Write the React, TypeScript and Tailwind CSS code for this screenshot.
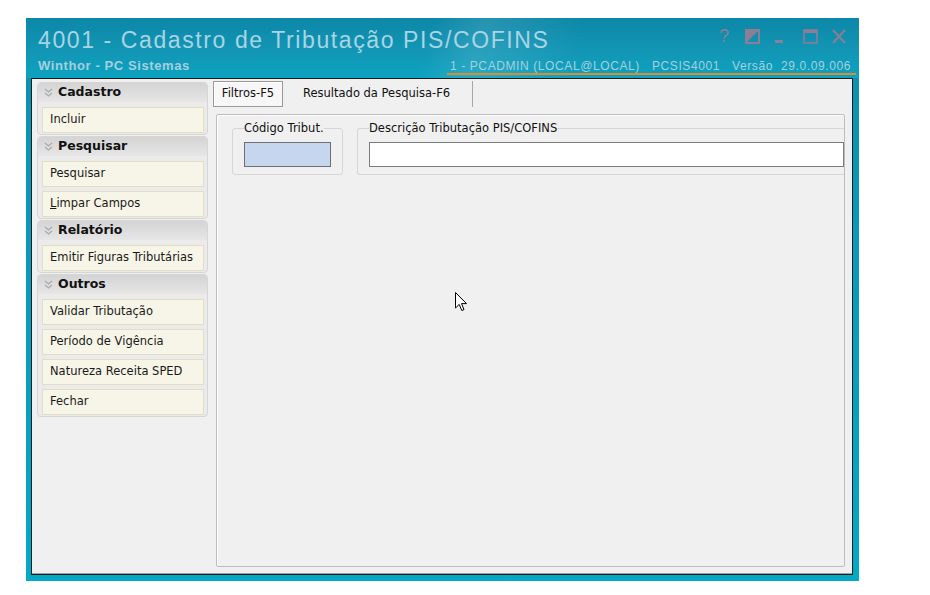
import type { ReactNode } from "react";

const groups: { title: string; items: ReactNode[] }[] = [
	{ title: "Cadastro", items: ["Incluir"] },
	{
		title: "Pesquisar",
		items: [
			"Pesquisar",
			<>
				<span className="underline">L</span>impar Campos
			</>,
		],
	},
	{ title: "Relatório", items: ["Emitir Figuras Tributárias"] },
	{
		title: "Outros",
		items: ["Validar Tributação", "Período de Vigência", "Natureza Receita SPED", "Fechar"],
	},
];

const ui = { fontFamily: '"DejaVu Sans", Verdana, sans-serif' };
const arial = { fontFamily: '"Liberation Sans", Arial, sans-serif' };

function Chevron() {
	return (
		<svg width="9" height="10" viewBox="0 0 9 10" className="shrink-0">
			<path d="M1 1 L4.5 4 L8 1 M1 5 L4.5 8 L8 5" fill="none" stroke="#a8a8a8" strokeWidth="1.2" />
		</svg>
	);
}

function Group({ title, items }: { title: string; items: ReactNode[] }) {
	return (
		<div className="flex flex-col rounded-[4px] border border-[#d6d6d6] bg-[#ebebeb] pb-[1px]">
			<div className="flex h-[19px] items-center gap-[5px] rounded-t-[4px] bg-gradient-to-b from-[#d4d4d4] to-[#e6e6e6] pl-[6px]">
				<Chevron />
				<span className="text-[12.5px] font-bold text-[#111]">{title}</span>
			</div>
			<div className="flex flex-col gap-[4px] pt-[5px] pr-[3px] pl-[4px]">
				{items.map((item, i) => (
					<div
						key={i}
						className="flex h-[26px] items-center border border-[#e2ddc3] bg-[#f7f5e7] pl-[7px] text-[11.5px] text-[#1a1a1a]"
					>
						<span>{item}</span>
					</div>
				))}
			</div>
		</div>
	);
}

function Cursor() {
	return (
		<svg width="13" height="20" viewBox="0 0 13 20" className="absolute top-[292px] left-[455px]">
			<path
				d="M0.5 0.5 L0.5 16 L4.2 12.4 L6.8 18.5 L9 17.6 L6.5 11.6 L11.5 11.6 Z"
				fill="#fff"
				stroke="#000"
				strokeWidth="1"
				strokeLinejoin="round"
			/>
		</svg>
	);
}

function WindowControls() {
	const c = "#8b7e95";
	return (
		<div className="mr-[10px] flex items-center pt-[9px]">
			<span className="w-[26px] text-[18px] leading-[18px] text-[#8b7e95]" style={arial}>
				?
			</span>
			<svg width="15" height="15" viewBox="0 0 15 15" className="mr-[14px]">
				<rect x="1" y="1" width="13" height="13" fill="none" stroke={c} strokeWidth="2" />
				<path d="M1 1 L14 1 L1 14 Z" fill={c} />
			</svg>
			<svg width="10" height="15" viewBox="0 0 10 15" className="mr-[19px]">
				<rect x="1" y="11" width="8" height="3" fill={c} />
			</svg>
			<svg width="15" height="15" viewBox="0 0 15 15" className="mr-[14px]">
				<rect x="1" y="1" width="13" height="13" fill="none" stroke={c} strokeWidth="1.6" />
				<rect x="1" y="1" width="13" height="3" fill={c} />
			</svg>
			<svg width="14" height="15" viewBox="0 0 14 15">
				<path d="M1 1 L13 14 M13 1 L1 14" stroke={c} strokeWidth="2" />
			</svg>
		</div>
	);
}

export default function App() {
	return (
		<div className="relative h-[595px] w-[930px] overflow-hidden bg-white" style={arial}>
			<div className="pt-[18px] pl-[26px]">
				<div className="flex h-[563px] w-[833px] flex-col bg-gradient-to-b from-[#0d8fae] to-[#03a9c5]">
					{/* title bar */}
					<div className="flex h-[60px] flex-col justify-between bg-[linear-gradient(105deg,transparent_48%,rgba(255,255,255,0.1)_54%,transparent_66%),linear-gradient(180deg,#0c87a7_0%,#1396b5_55%,#0ba3c0_100%)] pr-[3px] pl-[12px]">
						<div className="flex items-start justify-between">
							<span className="pt-[8px] text-[23px] leading-[28px] tracking-[1.6px] text-[#a9d4e4]">
								4001 - Cadastro de Tributação PIS/COFINS
							</span>
							<WindowControls />
						</div>
						<div className="flex items-end justify-between pb-[3px]">
							<span className="mb-[2px] text-[13px] leading-[15px] font-bold tracking-[0.6px] text-[#a6cfdd]">
								Winthor - PC Sistemas
							</span>
							<div className="flex gap-[12px] border-b-2 border-[#e48a2c] pr-[5px] pl-[3px] text-[12px] leading-[14px] tracking-[0.6px] text-[#a6d0df]">
								<span>1 - PCADMIN (LOCAL@LOCAL)</span>
								<span>PCSIS4001</span>
								<span className="flex gap-[8px]">
									<span>Versão</span>
									<span>29.0.09.006</span>
								</span>
							</div>
						</div>
					</div>

					{/* client area */}
					<div
						className="mr-[6px] ml-[5px] flex h-[497px] border border-[#1c1c1c] bg-[#f0f0f0] shadow-[inset_0_-1px_0_#a0a0a0]"
						style={ui}
					>
						<div className="flex w-[177px] shrink-0 flex-col gap-[1px] pt-[3px] pr-[1px] pl-[5px]">
							{groups.map((g) => (
								<Group key={g.title} title={g.title} items={g.items} />
							))}
						</div>

						<div className="flex flex-1 flex-col pt-[2px]">
							<div className="flex h-[26px] pl-[4px] text-[11.5px] text-[#111]">
								<div className="flex w-[70px] items-center justify-center border border-[#9a9a9a] bg-[#f7f7f7] shadow-[inset_1px_1px_0_#fff]">
									Filtros-F5
								</div>
								<div className="flex w-[190px] items-center border-r border-[#a8a8a8] pl-[20px]">
									Resultado da Pesquisa-F6
								</div>
							</div>

							<div className="mt-[7px] mr-[7px] mb-[7px] ml-[7px] flex flex-1 gap-[14px] rounded-[2px] border border-[#bdbdbd] pt-[7px] pl-[15px] shadow-[inset_1px_1px_0_#fff]">
								<fieldset className="h-[53px] w-[111px] shrink-0 rounded-[3px] border border-[#d6d6d6] px-[11px]">
									<legend className="text-[11.5px] leading-[13px] text-[#111]">Código Tribut.</legend>
									<input
										type="text"
										readOnly
										className="mt-[7px] block h-[25px] w-[87px] border border-[#6f6f6f] bg-[#c5d6ee] outline-none"
									/>
								</fieldset>
								<fieldset className="h-[53px] flex-1 rounded-l-[3px] border border-r-0 border-[#d6d6d6] pl-[11px]">
									<legend className="text-[11.5px] leading-[13px] text-[#111]">
										Descrição Tributação PIS/COFINS
									</legend>
									<input
										type="text"
										readOnly
										className="mt-[7px] block h-[25px] w-full border border-[#7d7d7d] bg-white outline-none"
									/>
								</fieldset>
							</div>
						</div>
					</div>
				</div>
			</div>
			<Cursor />
		</div>
	);
}
